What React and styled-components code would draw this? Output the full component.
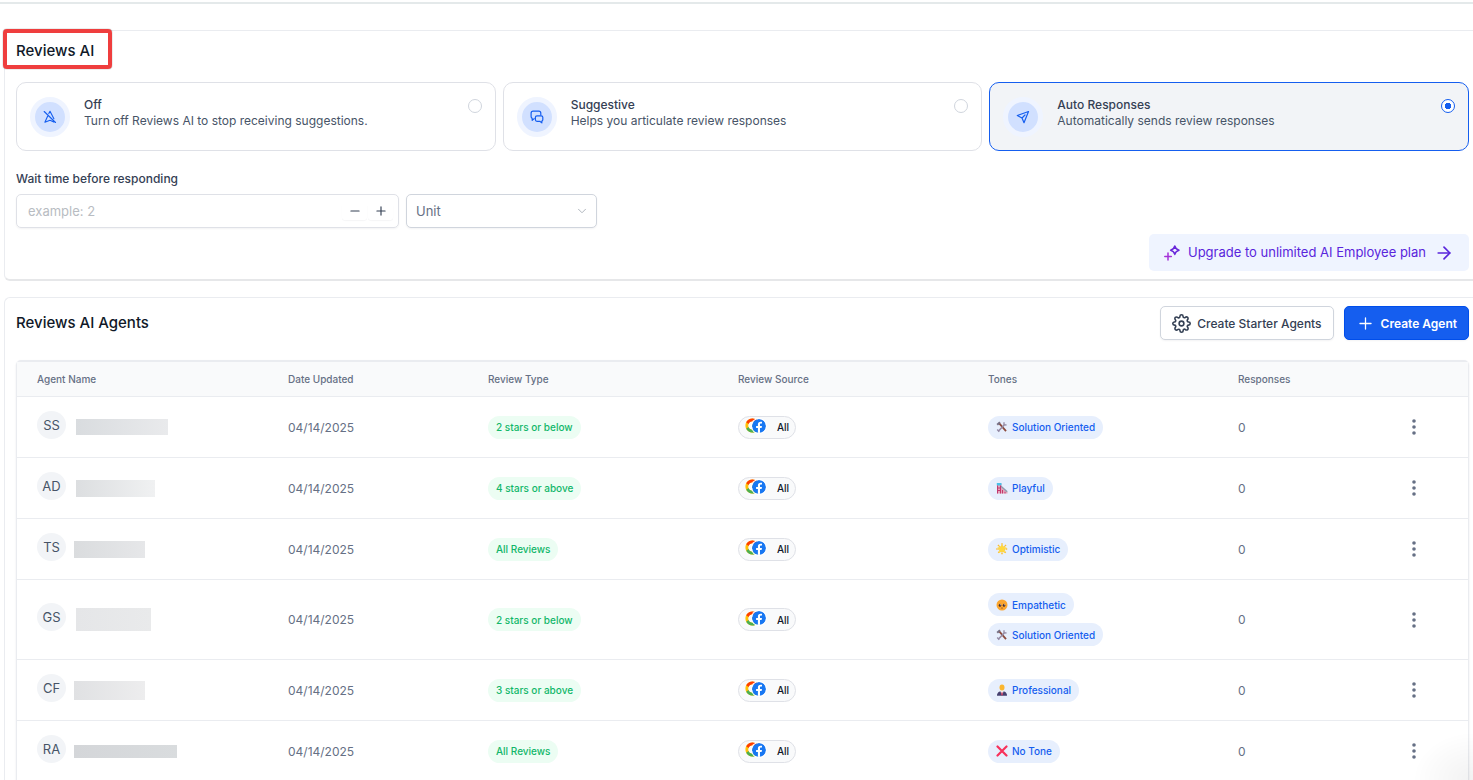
import styled, { createGlobalStyle } from "styled-components";
import { FiSettings, FiPlus, FiMinus, FiArrowRight, FiChevronDown } from "react-icons/fi";
import { FcGoogle } from "react-icons/fc";

const modes = [
    { id: "off", title: "Off", text: "Turn off Reviews AI to stop receiving suggestions.", icon: <OffIcon /> },
    { id: "suggestive", title: "Suggestive", text: "Helps you articulate review responses", icon: <ChatIcon /> },
    { id: "auto", title: "Auto Responses", text: "Automatically sends review responses", icon: <SendIcon /> },
];

const agents = [
    { initials: "SS", bar: [92, 16, "#d9dcdf", "#e9eaec"], gap: 10, type: "2 stars or below", tones: ["Solution Oriented"] },
    { initials: "AD", bar: [79, 17, "#dcdee0", "#f0f1f2"], gap: 10, type: "4 stars or above", tones: ["Playful"] },
    { initials: "TS", bar: [71, 17, "#dadcde", "#e6e7e9"], gap: 8, type: "All Reviews", tones: ["Optimistic"] },
    { initials: "GS", bar: [75, 23, "#e5e6e8", "#e9eaeb"], gap: 10, type: "2 stars or below", tones: ["Empathetic", "Solution Oriented"] },
    { initials: "CF", bar: [71, 19, "#e0e1e3", "#ededee"], gap: 8, type: "3 stars or above", tones: ["Professional"] },
    { initials: "RA", bar: [103, 13, "#d4d6d9", "#d9dcde"], gap: 8, type: "All Reviews", tones: ["No Tone"] },
];

const App = () => {

    return (
        <>
            <GlobalStyle />
            <TopLine />
            <Page>
                <Panel>
                    <TitleBox>
                        <Title>Reviews AI</Title>
                    </TitleBox>
                    <Modes>
                        {modes.map((mode) => (
                            <ModeCard key={mode.id}>
                                <ModeIcon>{mode.icon}</ModeIcon>
                                <ModeText>
                                    <strong>{mode.title}</strong>
                                    <span>{mode.text}</span>
                                </ModeText>
                                <Radio name="mode" value={mode.id} defaultChecked={mode.id === "auto"} />
                            </ModeCard>
                        ))}
                    </Modes>
                    <WaitLabel htmlFor="wait">Wait time before responding</WaitLabel>
                    <WaitRow>
                        <NumberBox>
                            <input id="wait" type="text" inputMode="numeric" placeholder="example: 2" />
                            <StepButton type="button" aria-label="Decrease"><FiMinus size={14} /></StepButton>
                            <StepButton type="button" aria-label="Increase"><FiPlus size={14} /></StepButton>
                        </NumberBox>
                        <SelectBox>
                            <select aria-label="Unit" defaultValue="">
                                <option value="">Unit</option>
                                <option value="minutes">Minutes</option>
                                <option value="hours">Hours</option>
                            </select>
                            <FiChevronDown size={14} strokeWidth={1.5} />
                        </SelectBox>
                    </WaitRow>
                    <UpgradeButton type="button">
                        <SparkIcon />
                        <span>Upgrade to unlimited AI Employee plan</span>
                        <FiArrowRight size={20} />
                    </UpgradeButton>
                </Panel>

                <AgentsPanel>
                    <AgentsHeader>
                        <Title>Reviews AI Agents</Title>
                        <Actions>
                            <Button type="button"><FiSettings size={19} />Create Starter Agents</Button>
                            <Button type="button" $primary><FiPlus size={19} strokeWidth={1.6} />Create Agent</Button>
                        </Actions>
                    </AgentsHeader>
                    <TableFrame>
                        <Table>
                            <thead>
                                <tr>
                                    <Th $width={251}>Agent Name</Th>
                                    <Th $width={200}>Date Updated</Th>
                                    <Th $width={250}>Review Type</Th>
                                    <Th $width={250}>Review Source</Th>
                                    <Th $width={250}>Tones</Th>
                                    <Th $width={175}>Responses</Th>
                                    <Th aria-label="Actions" />
                                </tr>
                            </thead>
                            <tbody>
                                {agents.map((agent) => (
                                    <tr key={agent.initials}>
                                        <Td>
                                            <Agent $gap={agent.gap}>
                                                <Avatar>{agent.initials}</Avatar>
                                                <NameBar $bar={agent.bar} />
                                            </Agent>
                                        </Td>
                                        <Td>04/14/2025</Td>
                                        <Td><TypeBadge>{agent.type}</TypeBadge></Td>
                                        <Td>
                                            <SourceBadge>
                                                <Logos><FcGoogle size={17} /><FacebookIcon /></Logos>
                                                All
                                            </SourceBadge>
                                        </Td>
                                        <Td>
                                            <Tones>
                                                {agent.tones.map((tone) => (
                                                    <ToneBadge key={tone}><ToneIcon name={tone} />{tone}</ToneBadge>
                                                ))}
                                            </Tones>
                                        </Td>
                                        <Td>0</Td>
                                        <Td $menu>
                                            <MenuButton type="button" aria-label={`Options for ${agent.initials}`}>
                                                <svg width="4" height="16" viewBox="0 0 4 16" fill="#667085">
                                                    <circle cx="2" cy="2" r="1.8" />
                                                    <circle cx="2" cy="8" r="1.8" />
                                                    <circle cx="2" cy="14" r="1.8" />
                                                </svg>
                                            </MenuButton>
                                        </Td>
                                    </tr>
                                ))}
                            </tbody>
                        </Table>
                    </TableFrame>
                </AgentsPanel>
            </Page>
            <CornerGlow />
        </>
    )

}

export default App;

function OffIcon() {
    return (
        <svg width="14" height="14" viewBox="0 0 14 14" fill="none" stroke="#155eef" strokeWidth="1.1" strokeLinecap="round" strokeLinejoin="round">
            <path d="M1.2 1.5l11.3 11M5.8 3.6L7 1.3l3.9 7.4M4.6 6.2L1.9 12.3 7 10.3l3.8 1.8" />
        </svg>
    )
}

function ChatIcon() {
    return (
        <svg width="14" height="14" viewBox="0 0 14 14" fill="none" stroke="#155eef" strokeWidth="1.2" strokeLinecap="round" strokeLinejoin="round">
            <path d="M4.2 8.6L2.2 10.3V8.4C1.4 8 1.1 7.4 1.1 6.6V3.2c0-1.2.7-2 2-2h5.7c1.3 0 2 .8 2 2v1.7" />
            <path d="M7 5.8h4.2c1 0 1.6.6 1.6 1.5v2.5c0 .7-.3 1.2-1 1.4v1.7l-2-1.6H7c-1 0-1.6-.6-1.6-1.5V7.3c0-.9.6-1.5 1.6-1.5z" />
        </svg>
    )
}

function SendIcon() {
    return (
        <svg width="14" height="14" viewBox="0 0 14 14" fill="none" stroke="#155eef" strokeWidth="1.2" strokeLinecap="round" strokeLinejoin="round">
            <path d="M12.5 1.5L1.3 5.5l4.7 2.5 2 4.7zM6 8l3-3" />
        </svg>
    )
}

function SparkIcon() {
    return (
        <svg width="16" height="16" viewBox="0 0 16 16" fill="none" strokeWidth="1.5" strokeLinecap="round" strokeLinejoin="round">
            <path d="M10.8 1c.6 2.5 1.6 3.5 4.2 4.2-2.6.7-3.6 1.7-4.2 4.2-.6-2.5-1.6-3.5-4.2-4.2C9.2 4.5 10.2 3.5 10.8 1z" stroke="#6927da" />
            <path d="M4 8v7M.8 11.5h6.5" stroke="#a531d8" />
        </svg>
    )
}

function FacebookIcon() {
    return (
        <svg width="14" height="14" viewBox="0 0 14 14">
            <circle cx="7" cy="7" r="7" fill="#1877f2" />
            <path d="M5.9 14V9.1H4.1V7h1.8V5.5c0-1.8 1-2.8 2.7-2.8.7 0 1.4.1 1.4.1v1.7h-.9c-.9 0-1.1.5-1.1 1.1V7h2l-.4 2.1H8V14z" fill="#fff" />
        </svg>
    )
}

const tonePictures = {
    "Solution Oriented": (
        <>
            <path d="M3 2.2l7 8" stroke="#8b4a3c" strokeWidth="1.8" />
            <path d="M1.2 3.8L4 1.2" stroke="#777084" strokeWidth="2" />
            <path d="M8.3 4L2.5 10" stroke="#9389a3" strokeWidth="1.5" />
            <path d="M8 1.3v2.4l2.5.3M1.2 8.5l2 2.3" stroke="#9389a3" strokeWidth="1.3" fill="none" />
        </>
    ),
    "Playful": (
        <>
            <path d="M1 1.5h4.5v3L11.5 10v1.5H1z" fill="#e3a5bb" />
            <path d="M.8 1h4.7v2.5H.8z" fill="#48c0e8" />
            <path d="M5 4.2l6.2 5.5" stroke="#8d9db0" strokeWidth="1.4" />
            <path d="M1.5 3.5v8M4.5 3.5v8M1.5 6h3M1.5 8.5h3M6.5 8v3.5M9 9.8v1.7" stroke="#c2386e" />
        </>
    ),
    "Optimistic": (
        <>
            <path d="M6 .3v11.4M.3 6h11.4M2 2l8 8M10 2l-8 8" stroke="#fbbe2e" strokeWidth="1.5" strokeDasharray="1.4 .5" />
            <path d="M6 1.2l1.5 2.9 3.2.4-2.3 2.3.6 3.3L6 8.6 3 10.1l.6-3.3-2.3-2.3 3.2-.4z" fill="#ffd83d" />
        </>
    ),
    "Empathetic": (
        <>
            <circle cx="6" cy="6" r="5.5" fill="#fba62f" />
            <ellipse cx="4" cy="6.3" rx="1.2" ry="1.5" fill="#40272b" />
            <ellipse cx="8" cy="6.3" rx="1.2" ry="1.5" fill="#40272b" />
            <circle cx="4.3" cy="5.8" r=".5" fill="#fff" />
            <circle cx="8.3" cy="5.8" r=".5" fill="#fff" />
            <path d="M5.2 9.2c.5-.4 1.1-.4 1.6 0" stroke="#713a24" strokeWidth=".7" fill="none" />
        </>
    ),
    "Professional": (
        <>
            <path d="M1 11.7c0-3.3 2-4.5 5-4.5s5 1.2 5 4.5z" fill="#46406f" />
            <path d="M4.5 6h3v2L6 10 4.5 8z" fill="#eee" />
            <ellipse cx="6" cy="3.5" rx="2.5" ry="3" fill="#fbb62f" />
            <path d="M5.6 8h.8l.4 3.2H5.2z" fill="#e84268" />
        </>
    ),
    "No Tone": <path d="M1.5 1.5l9 9M10.5 1.5l-9 9" stroke="#f8315b" strokeWidth="2.2" strokeLinecap="round" />,
};

function ToneIcon({ name }) {
    return <svg width="12" height="12" viewBox="0 0 12 12" aria-hidden="true">{tonePictures[name]}</svg>
}

const GlobalStyle = createGlobalStyle`
    * {
        box-sizing: border-box;
    }
    body {
        margin: 0;
        background-color: #fff;
        color: #344054;
        font-family: Inter, "Liberation Sans", sans-serif;
        font-size: 12px;
    }
    button, input, select {
        font-family: inherit;
    }
    svg {
        flex-shrink: 0;
    }
`;

const TopLine = styled.div`
    height: 4px;
    border-bottom: 2px solid #e4e9ea;
`;

const Page = styled.main`
    display: flex;
    flex-direction: column;
    gap: 16px;
    padding: 26px 0 0 4px;
`;

const Panel = styled.section`
    display: flex;
    flex-direction: column;
    padding: 0 4px 8px 11px;
    border: 1px solid #eaecf0;
    border-right: 0;
    border-bottom: 2px solid #e6e7e9;
    border-radius: 6px 0 0 6px;
`;

const Title = styled.h2`
    margin: 0;
    color: #101828;
    font-size: 15px;
    line-height: 20px;
    font-weight: 500;
`;

const TitleBox = styled.div`
    position: relative;
    align-self: flex-start;
    padding: 10px 0 21px;
    &::after {
        content: "";
        position: absolute;
        inset: -2px -18px 13px -13px;
        border: 4px solid #ef3e3e;
        border-radius: 4px;
        box-shadow: 0 0 1px #444;
    }
`;

const Modes = styled.div`
    display: grid;
    grid-template-columns: repeat(3, 1fr);
    gap: 7px;
`;

const ModeCard = styled.label`
    display: flex;
    align-items: flex-start;
    height: 69px;
    padding: 14px 13px;
    border: 1px solid #dfe1e7;
    border-radius: 10px;
    cursor: pointer;
    &:has(input:checked) {
        background-color: #f2f4f7;
        border-color: #155eef;
    }
`;

const ModeIcon = styled.span`
    display: flex;
    align-items: center;
    justify-content: center;
    width: 40px;
    height: 40px;
    background-color: #d1e0ff;
    border: 5px solid #eff4ff;
    border-radius: 50%;
`;

const ModeText = styled.span`
    flex: 1;
    display: flex;
    flex-direction: column;
    margin-left: 14px;
    line-height: 16px;
    color: #475467;
    strong {
        color: #344054;
        font-weight: 500;
    }
`;

const Radio = styled.input.attrs({ type: "radio" })`
    appearance: none;
    width: 14px;
    height: 14px;
    margin: 2px 0 0;
    border: 1px solid #d0d5dd;
    border-radius: 50%;
    background-color: #fff;
    &:checked {
        border-color: #155eef;
        background: radial-gradient(circle, #155eef 3px, #fff 3px);
    }
`;

const WaitLabel = styled.label`
    margin: 20px 0 7px;
    line-height: 16px;
    font-weight: 500;
`;

const WaitRow = styled.div`
    display: flex;
    gap: 7px;
`;

const NumberBox = styled.div`
    flex: 0 1 383px;
    display: flex;
    align-items: center;
    gap: 1px;
    height: 34px;
    padding: 0 5px 0 11px;
    border: 1px solid #dfe1e7;
    border-radius: 5px;
    box-shadow: 0 1px 2px #1018280d;
    input {
        flex: 1;
        min-width: 0;
        padding: 0;
        border: 0;
        outline: 0;
        font-size: 13px;
    }
    input::placeholder {
        color: #b8bcc2;
    }
`;

const StepButton = styled.button`
    display: flex;
    align-items: center;
    justify-content: center;
    width: 25px;
    height: 18px;
    padding: 0;
    border: 0;
    border-radius: 3px;
    background-color: #fff;
    box-shadow: 0 1px 1px #1018280a;
    color: #344054;
`;

const SelectBox = styled.div`
    flex: 0 1 191px;
    position: relative;
    select {
        appearance: none;
        width: 100%;
        height: 34px;
        padding: 0 9px;
        border: 1px solid #d0d5dd;
        border-radius: 5px;
        background-color: #fff;
        box-shadow: 0 1px 2px #1018280d;
        color: #667085;
        font-size: 13px;
    }
    svg {
        position: absolute;
        right: 8px;
        top: 10px;
        color: #a4aab4;
        pointer-events: none;
    }
`;

const UpgradeButton = styled.button`
    align-self: flex-end;
    display: flex;
    align-items: center;
    gap: 8px;
    height: 37px;
    margin-top: 6px;
    padding: 0 15px;
    border: 0;
    border-radius: 5px;
    background-color: #eff4ff;
    color: #5925dc;
    font-size: 13px;
    font-weight: 400;
    span {
        padding-bottom: 2px;
    }
`;

const AgentsPanel = styled.section`
    padding: 8px 4px 0 11px;
    border: 1px solid #eaecf0;
    border-width: 1px 0 0 1px;
    border-radius: 6px 0 0 0;
`;

const AgentsHeader = styled.div`
    display: flex;
    align-items: center;
    justify-content: space-between;
    margin-bottom: 20px;
`;

const Actions = styled.div`
    display: flex;
    gap: 10px;
`;

const Button = styled.button`
    display: flex;
    align-items: center;
    gap: 6px;
    height: 34px;
    padding: 0 11px;
    border: 1px solid ${({ $primary }) => ($primary ? "#004eeb" : "#d0d5dd")};
    border-radius: 5px;
    background-color: ${({ $primary }) => ($primary ? "#155eef" : "#fff")};
    box-shadow: 0 1px 2px #1018280d;
    color: ${({ $primary }) => ($primary ? "#fff" : "#344054")};
    font-size: 12px;
    font-weight: ${({ $primary }) => ($primary ? 600 : 500)};
`;

const TableFrame = styled.div`
    border: 1px solid #eaecf0;
    border-top-width: 2px;
    border-radius: 5px 5px 0 0;
    box-shadow: 0 1px 2px #1018281a;
`;

const Table = styled.table`
    width: 100%;
    table-layout: fixed;
    border-collapse: separate;
    border-spacing: 0;
`;

const Th = styled.th`
    width: ${({ $width }) => ($width ? `${$width}px` : "auto")};
    height: 35px;
    padding: 0 20px;
    border-bottom: 1px solid #eaecf0;
    background-color: #f9fafb;
    color: #667085;
    font-size: 10px;
    font-weight: 500;
    text-align: left;
`;

const Td = styled.td`
    height: 61px;
    padding: ${({ $menu }) => ($menu ? "13px 9px" : "13px 20px")};
    border-bottom: 1px solid #eaecf0;
    color: #667085;
    font-size: 12px;
`;

const Agent = styled.div`
    display: flex;
    align-items: center;
    gap: ${({ $gap }) => $gap}px;
`;

const Avatar = styled.span`
    display: flex;
    align-items: center;
    justify-content: center;
    width: 29px;
    height: 28px;
    margin-bottom: 5px;
    border-radius: 50%;
    background-color: #f2f4f7;
    color: #475467;
    font-size: 13px;
`;

const NameBar = styled.span`
    width: ${({ $bar }) => $bar[0]}px;
    height: ${({ $bar }) => $bar[1]}px;
    background: linear-gradient(90deg, ${({ $bar }) => $bar[2]}, ${({ $bar }) => $bar[3]});
`;

const Badge = styled.span`
    display: inline-flex;
    align-items: center;
    height: 23px;
    padding: 0 8px;
    border-radius: 12px;
    font-size: 10px;
    font-weight: 500;
`;

const TypeBadge = styled(Badge)`
    background-color: #ecfdf3;
    color: #12b76a;
`;

const SourceBadge = styled(Badge)`
    gap: 11px;
    padding: 0 6px 0 5px;
    border: 1px solid #dfe1e7;
    background-color: #f9fafb;
    color: #101828;
`;

const Logos = styled.span`
    display: flex;
    align-items: center;
    margin-bottom: 3px;
    svg + svg {
        margin-left: -9px;
        border-radius: 50%;
        box-shadow: 0 0 0 1px #fff;
    }
`;

const Tones = styled.div`
    display: flex;
    flex-direction: column;
    align-items: flex-start;
    gap: 7px;
`;

const ToneBadge = styled(Badge)`
    gap: 4px;
    background-color: #e7effd;
    color: #155eef;
`;

const MenuButton = styled.button`
    display: flex;
    align-items: center;
    justify-content: center;
    width: 24px;
    height: 24px;
    padding: 0;
    border: 0;
    background-color: transparent;
`;

const CornerGlow = styled.div`
    position: fixed;
    right: 0;
    bottom: 0;
    width: 60px;
    height: 48px;
    background: radial-gradient(farthest-side at bottom right, #0000000d, #00000000);
    pointer-events: none;
`;
